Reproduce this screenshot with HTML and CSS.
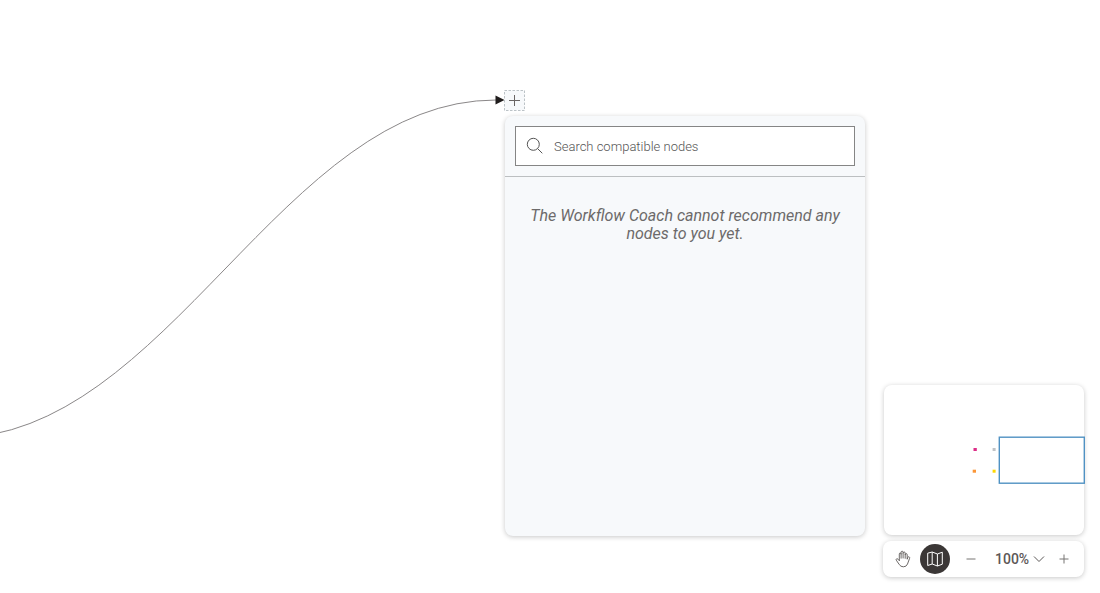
FILE: index.html
```html
<!DOCTYPE html>
<html lang="en">
<head>
<meta charset="utf-8">
<title>Workflow editor</title>
<link rel="stylesheet" href="styles.css">
</head>
<body>
<main class="canvas">
  <svg class="connector" width="520" height="460" aria-hidden="true">
    <path d="M-46 438C168 438 282 100 496 100" fill="none" stroke="#8a8788" stroke-width="1"/>
    <path d="M495.500 95.500L504.500 100L495.500 104.500Z" fill="#201d1d"/>
  </svg>
  <button class="add-node" aria-label="Add node">
    <svg width="21" height="21" viewBox="0 0 21 21"><rect x=".5" y=".5" width="20" height="20" fill="#f7f9fb" stroke="#bcc3c7" stroke-dasharray="2.500 1.500"/><path d="M5 10.500H16M10.500 5V16" stroke="#6a6564" fill="none"/></svg>
  </button>
  <section class="picker">
    <header class="picker-header">
      <label class="search">
        <svg width="18" height="18" viewBox="0 0 18 18" fill="none" stroke="#555" stroke-width="1"><circle cx="7.300" cy="7.300" r="6"/><path d="M11.600 11.600L16.300 16.300"/></svg>
        <input class="search-input" type="text" placeholder="Search compatible nodes" aria-label="Search compatible nodes">
      </label>
    </header>
    <p class="message">The Workflow Coach cannot recommend any nodes to you yet.</p>
  </section>
  <aside class="tools">
    <div class="minimap">
      <svg class="map" viewBox="0 0 200 150" role="img" aria-label="Minimap">
        <rect x="89.500" y="63" width="3.300" height="3" fill="#dc2d87"/>
        <rect x="108.600" y="63" width="3" height="3" fill="#c0c3c6"/>
        <rect x="88.700" y="84.700" width="3.300" height="3" fill="#fb9637"/>
        <rect x="108.600" y="84.700" width="3" height="3" fill="#ffd800"/>
        <rect x="115.300" y="52.200" width="85" height="46" fill="none" stroke="#5092c3" stroke-width="1.400"/>
      </svg>
    </div>
    <div class="toolbar">
      <button class="tool" aria-label="Pan">
        <svg width="18" height="18" viewBox="0 0 18 18" fill="none" stroke="#5c5857" stroke-width=".9" stroke-linecap="round" stroke-linejoin="round"><path d="M5.300 10.400V4.100Q5.300 3 6.200 3Q7.100 3 7.100 4.100V8.200M7.100 4V2.300Q7.100 1.200 8.100 1.200Q9.100 1.200 9.100 2.300V8M9.100 3Q9.200 2 10.200 2Q11.200 2 11.200 3.200V8.300M11.200 4.500Q11.400 3.600 12.200 3.600Q13.200 3.600 13.200 4.800V9.200L13.800 7.400Q14.300 6.500 15.200 6.900Q15.900 7.300 15.600 8.300L13.500 14Q12.500 16.800 9.400 16.800Q6.700 16.800 5.300 14.600L2.300 10.200Q1.800 9.300 2.600 8.800Q3.300 8.500 4 9.200L5.300 10.600"/></svg>
      </button>
      <button class="tool active" aria-label="Minimap" aria-pressed="true">
        <svg width="18" height="18" viewBox="0 0 18 18" fill="none" stroke="#fff" stroke-width="1" stroke-linejoin="round"><path d="M1.700 3.200L6.200 2L11.400 4L16.300 2.200V14.200L11.400 16L6.200 14L1.700 15.500ZM6.200 2V14M11.400 4V16"/></svg>
      </button>
      <button class="tool zoom-out" aria-label="Zoom out">
        <svg width="12" height="12" viewBox="0 0 12 12"><path d="M1.500 6H10.500" stroke="#777473"/></svg>
      </button>
      <button class="zoom-level">100%
        <svg width="12" height="12" viewBox="0 0 12 12" fill="none" stroke="#5c5857"><path d="M1 3.500L6 8.500L11 3.500"/></svg>
      </button>
      <button class="tool zoom-in" aria-label="Zoom in">
        <svg width="12" height="12" viewBox="0 0 12 12"><path d="M1.500 6H10.500M6 1.500V10.500" stroke="#777473"/></svg>
      </button>
    </div>
  </aside>
</main>
</body>
</html>
```
FILE: styles.css
```css
* { box-sizing: border-box; }
body { margin: 0; background: #fff; font-family: Roboto, sans-serif; color: #3b3736; }
button { border: 0; padding: 0; background: none; font: inherit; color: inherit; }
svg { display: block; flex: none; }
.canvas { position: relative; min-height: 100vh; overflow: hidden; }
.connector { position: absolute; left: 0; top: 0; }
.add-node { position: absolute; left: 504px; top: 90px; }
.picker {
  position: absolute; left: 505px; top: 116px; width: 360px; height: 420px;
  background: #f7f9fb; border-radius: 8px; box-shadow: 0 1px 5px rgba(0, 0, 0, .22);
}
.picker-header { padding: 10px; border-bottom: 1px solid #bcbfc1; }
.search {
  display: flex; align-items: center; gap: 10px; height: 40px; padding: 0 10px;
  border: 1px solid #858585; background: #fff;
}
.search-input {
  flex: 1; min-width: 0; border: 0; outline: 0; padding: 2px 0 0; background: none;
  font: 300 13px/18px Roboto, sans-serif; color: #3b3736;
}
.search-input::placeholder { color: #555; opacity: 1; }
.message {
  margin: 0; padding: 30px 20px; text-align: center;
  font-size: 16px; line-height: 18px; font-style: italic; font-weight: 400; color: #6c6a6a;
}
.tools { position: absolute; right: 16px; bottom: 16px; width: 201px; display: grid; gap: 6px; }
.minimap, .toolbar { background: #fff; border-radius: 8px; box-shadow: 0 1px 5px rgba(0, 0, 0, .22); }
.minimap { margin-left: 1px; }
.map { width: 100%; overflow: visible; }
.toolbar { display: flex; align-items: center; height: 36px; padding: 0 5px; }
.tool { display: grid; place-items: center; width: 30px; height: 30px; border-radius: 50%; }
.active { margin-left: 2px; background: #3b3736; }
.zoom-out { margin-left: 6px; }
.zoom-level { display: flex; align-items: center; gap: 4px; margin-left: 9px; font-size: 14px; line-height: 18px; font-weight: 500; color: #5c5857; }
.zoom-in { margin-left: auto; }
```
